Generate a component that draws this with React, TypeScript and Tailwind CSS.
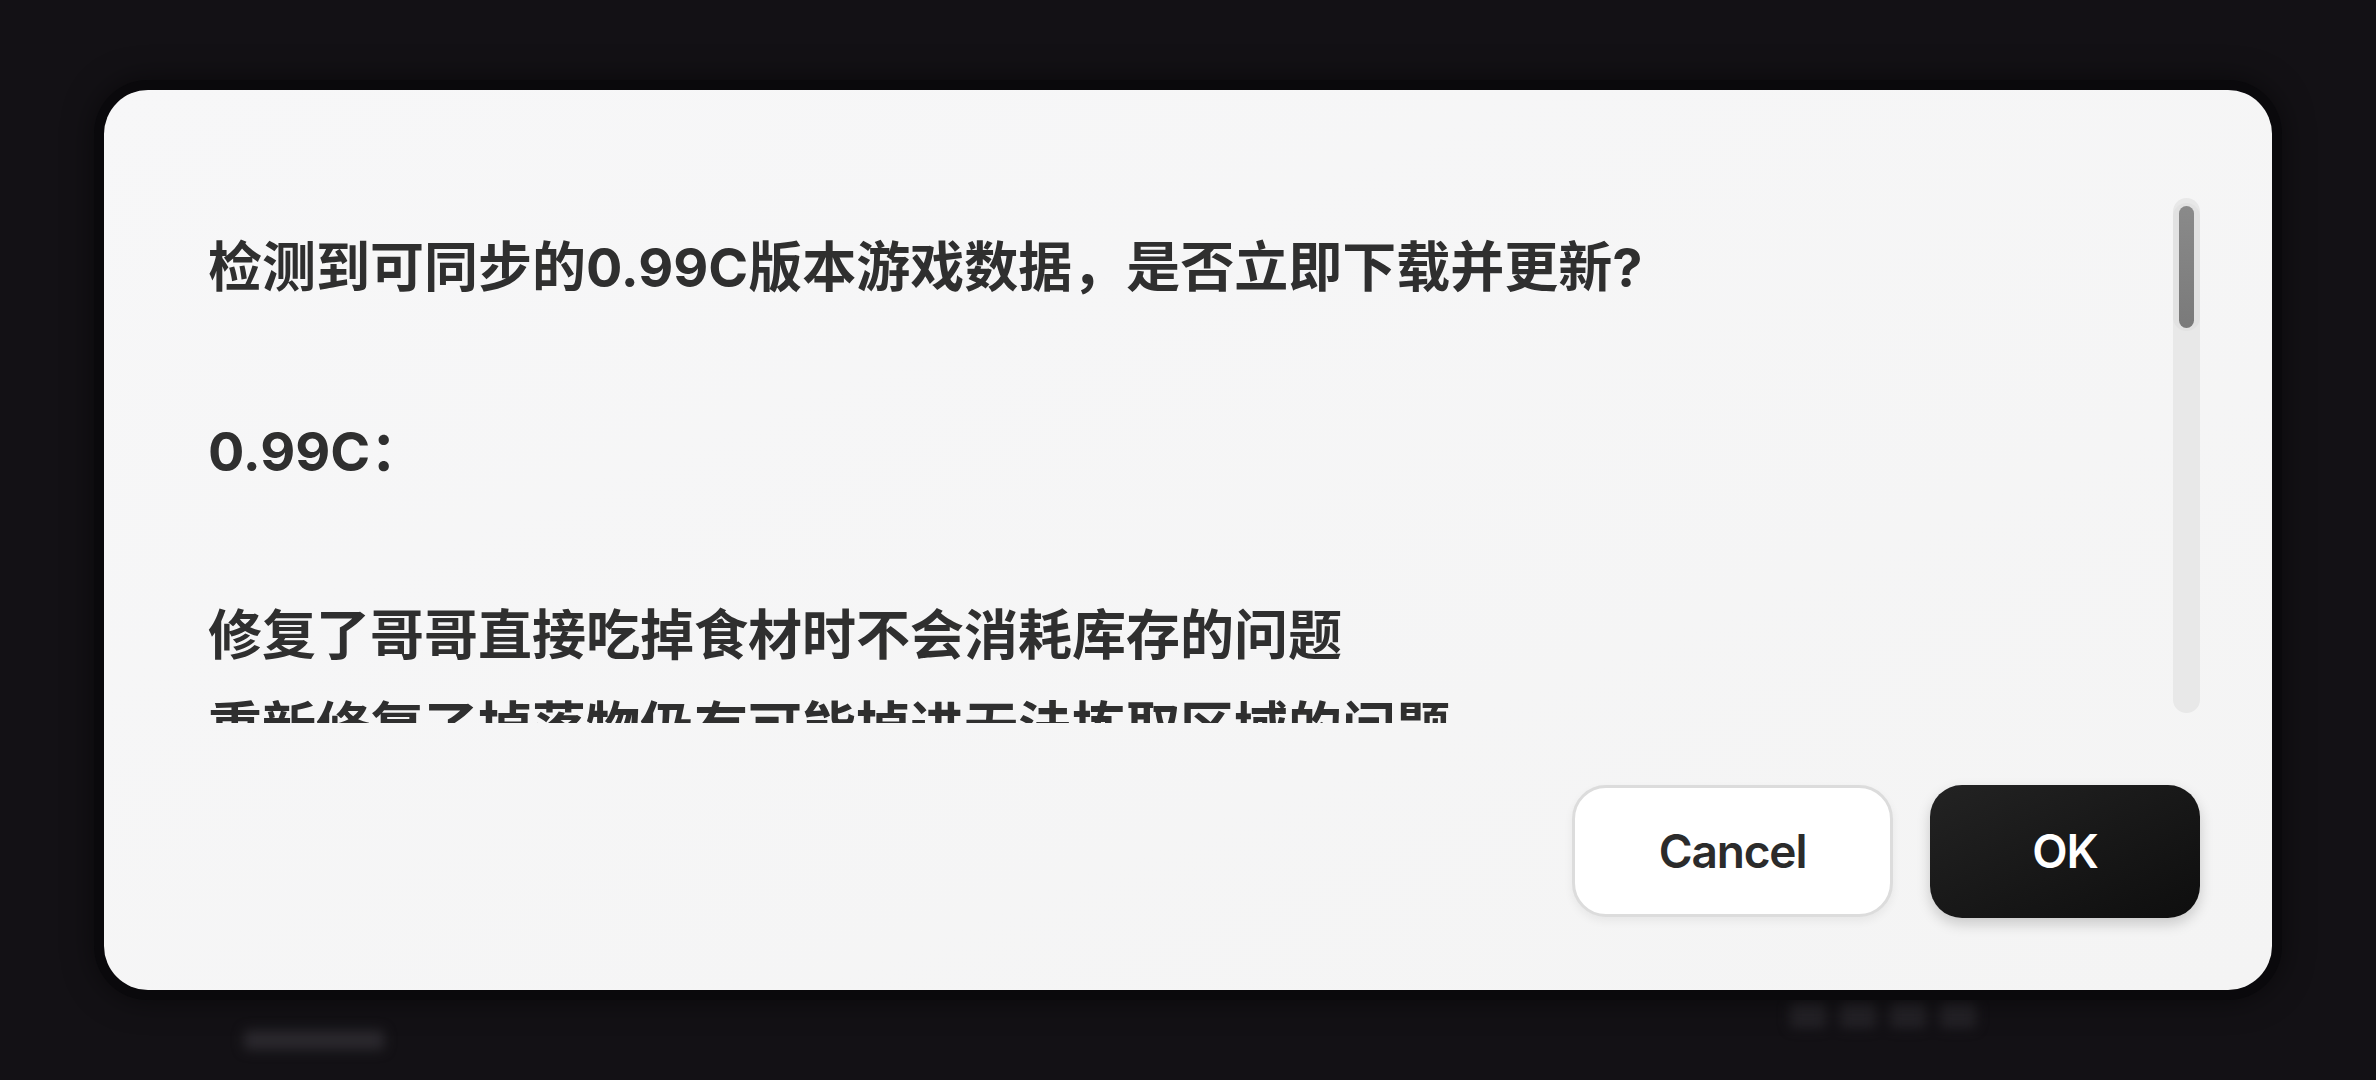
import React from 'react';

const cjk = { fontFamily: '"Noto Sans CJK SC", "Noto Sans", sans-serif' };
const latin = { fontFamily: 'Inter, "Noto Sans", sans-serif' };

const lines: string[] = [
  '检测到可同步的0.99C版本游戏数据，是否立即下载并更新?',
  '',
  '0.99C：',
  '',
  '修复了哥哥直接吃掉食材时不会消耗库存的问题',
  '重新修复了掉落物仍有可能掉进无法拣取区域的问题',
  '调整了部分菜谱的显示顺序',
];

// latin runs get Inter, the rest stays on the CJK font so the baseline doesn't move
const Line: React.FC<{ text: string }> = ({ text }) => (
  <>
    {text.split(/([A-Za-z0-9.?]+)/).map((part, i) =>
      i % 2 === 1 ? (
        <span key={i} style={latin}>
          {part}
        </span>
      ) : (
        part
      )
    )}
  </>
);

const ScrollBar: React.FC = () => (
  <div className="relative h-[515px] w-[27px] rounded-full bg-[#e8e8e8]">
    <div className="absolute left-0 top-[5px] flex h-[128px] w-[27px] items-center justify-center rounded-full bg-[#e2e2e2]">
      <div className="h-[122px] w-[15px] rounded-full bg-gradient-to-b from-[#8a8a8a] to-[#7a7a7a]" />
    </div>
  </div>
);

export default function App() {
  return (
    <div className="relative h-[1080px] w-[2376px] overflow-hidden bg-[#131115]">
      {/* blurred stuff behind the modal */}
      <div className="absolute left-[244px] top-[1030px] h-[20px] w-[140px] rounded bg-[#2a282d] blur-[6px]" />
      <div className="absolute left-[1790px] top-[1002px] flex gap-[14px] blur-[6px]">
        <div className="h-[26px] w-[36px] rounded bg-[#242227]" />
        <div className="h-[26px] w-[36px] rounded bg-[#242227]" />
        <div className="h-[26px] w-[36px] rounded bg-[#242227]" />
        <div className="h-[26px] w-[36px] rounded bg-[#242227]" />
      </div>

      <div className="absolute left-[104px] top-[90px] flex h-[900px] w-[2168px] flex-col rounded-[44px] bg-gradient-to-br from-[#f7f7f8] to-[#f4f4f4] pb-[72px] pl-[104px] pr-[72px] pt-[108px] shadow-[0_0_0_10px_#0a090c,0_0_30px_10px_rgba(0,0,0,0.5)]">
        <div className="flex h-[525px] items-start gap-[20px]">
          <div className="h-[525px] flex-1 overflow-hidden pt-[20px]" style={cjk}>
            {lines.map((l, i) => (
              <div key={i} className="h-[92px] whitespace-nowrap text-[54px] font-bold leading-[92px] text-[#2f2f2f]">
                <Line text={l} />
              </div>
            ))}
          </div>
          <ScrollBar />
        </div>

        <div className="mt-[62px] flex justify-end gap-[37px]" style={latin}>
          <button className="flex h-[132px] w-[321px] items-center justify-center rounded-[34px] border-[3px] border-[#dcdcdc] bg-white text-[46px] font-semibold tracking-tight text-[#2b2b2b] shadow-[0_4px_10px_rgba(0,0,0,0.06)]">
            Cancel
          </button>
          <button className="flex h-[133px] w-[270px] items-center justify-center rounded-[32px] bg-gradient-to-br from-[#232323] to-[#0e0e0e] text-[46px] font-semibold tracking-tight text-white shadow-[0_6px_14px_rgba(0,0,0,0.18)]">
            OK
          </button>
        </div>
      </div>
    </div>
  );
}
